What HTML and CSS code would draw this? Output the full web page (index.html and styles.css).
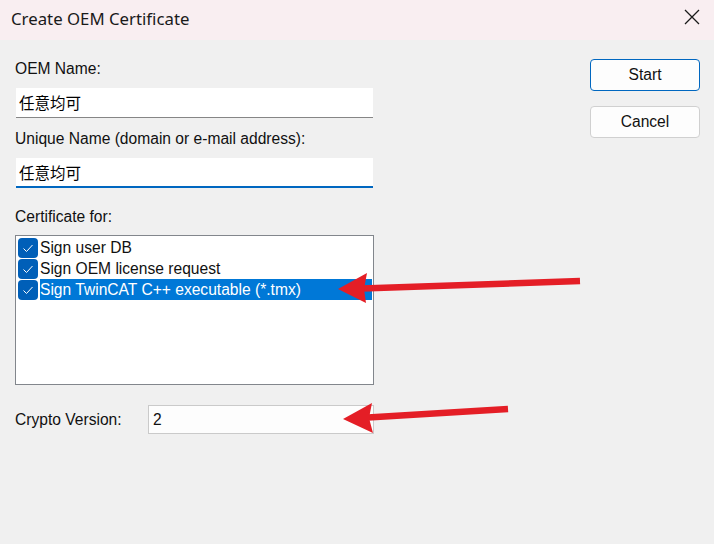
FILE: index.html
```html
<!DOCTYPE html>
<html>
<head>
<meta charset="utf-8">
<link rel="stylesheet" href="styles.css">
</head>
<body>
<div class="window">
  <div class="titlebar">
    <span class="title">Create OEM Certificate</span>
    <svg class="close" width="16" height="16" viewBox="0 0 16 16"><path d="M1 1 L15 15 M15 1 L1 15" stroke="#1a1a1a" stroke-width="1.3" fill="none"/></svg>
  </div>
  <div class="content">
    <div class="form">
      <div class="label">OEM Name:</div>
      <div class="input first">任意均可</div>
      <div class="label gap12">Unique Name (domain or e-mail address):</div>
      <div class="input focused">任意均可</div>
      <div class="label gap20">Certificate for:</div>
      <div class="list">
        <div class="item"><span class="check"><svg width="20" height="20" viewBox="0 0 20 20"><path d="M5.5 10.5 L8.5 13.5 L14.5 7" stroke="#fff" stroke-width="1" fill="none"/></svg></span><span class="text">Sign user DB</span></div>
        <div class="item"><span class="check"><svg width="20" height="20" viewBox="0 0 20 20"><path d="M5.5 10.5 L8.5 13.5 L14.5 7" stroke="#fff" stroke-width="1" fill="none"/></svg></span><span class="text">Sign OEM license request</span></div>
        <div class="item selected"><span class="check"><svg width="20" height="20" viewBox="0 0 20 20"><path d="M5.5 10.5 L8.5 13.5 L14.5 7" stroke="#fff" stroke-width="1" fill="none"/></svg></span><span class="text">Sign TwinCAT C++ executable (*.tmx)</span></div>
      </div>
      <div class="crypto">
        <span class="clabel">Crypto Version:</span>
        <div class="cinput">2</div>
      </div>
    </div>
    <div class="buttons">
      <button class="btn default">Start</button>
      <button class="btn">Cancel</button>
    </div>
  </div>
  <svg class="arrows" width="714" height="544" viewBox="0 0 714 544">
    <line x1="580" y1="281" x2="362" y2="288.5" stroke="#e41e26" stroke-width="6.5"/>
    <polygon points="338,289 367,273 364,289 366,303" fill="#e41e26"/>
    <line x1="508" y1="409" x2="368" y2="417.5" stroke="#e41e26" stroke-width="6.5"/>
    <polygon points="343,419 372,403 369,418 373,433" fill="#e41e26"/>
  </svg>
</div>
</body>
</html>
```

FILE: styles.css
```css
html, body {
  margin: 0;
  padding: 0;
  width: 714px;
  height: 544px;
  overflow: hidden;
  background: #f0f0f0;
}

.window {
  position: relative;
  width: 714px;
  height: 544px;
  background: #f0f0f0;
  font-family: "Liberation Sans", Arial, "Noto Sans CJK SC", sans-serif;
  font-size: 15.6px;
  color: #111;
}

.titlebar {
  height: 40px;
  background: #f9eef1;
  display: flex;
  align-items: center;
  justify-content: space-between;
  padding: 0 14px 0 11px;
  box-sizing: border-box;
}

.title {
  font-family: "Noto Sans", "Open Sans", sans-serif;
  font-size: 16.8px;
  color: #1a1a1a;
  margin-top: -4px;
}

.close {
  margin-top: -6px;
}

.content {
  display: flex;
  justify-content: space-between;
  padding: 20px 14px 0 15px;
}

.form {
  width: 359px;
  display: flex;
  flex-direction: column;
}

.label {
  line-height: 18px;
  height: 18px;
}

.gap12 { margin-top: 12px; }
.gap20 { margin-top: 20px; }

.input {
  margin-top: 10px;
  margin-left: 1px;
  width: 357px;
  height: 30px;
  box-sizing: border-box;
  background: #fff;
  border-bottom: 1px solid #868686;
  padding-left: 3px;
  line-height: 29px;
  font-family: "Noto Sans CJK SC", sans-serif;
  font-size: 15.5px;
  font-weight: 400;
  color: #000;
}

.input.focused {
  border-bottom: 2px solid #0067c0;
  line-height: 28px;
}

.list {
  margin-top: 9px;
  width: 359px;
  height: 150px;
  box-sizing: border-box;
  border: 1px solid #82868c;
  background: #fff;
  padding: 1px 1px 0 2px;
}

.item {
  display: flex;
  align-items: center;
  height: 21px;
}

.check {
  width: 20px;
  height: 20px;
  border-radius: 4px;
  background: #005fb8;
  display: flex;
  flex-shrink: 0;
}

.text {
  margin-left: 2px;
  line-height: 21px;
  flex: 1;
  padding-left: 0;
}

.item.selected .text {
  background: #0078d7;
  color: #fff;
}

.crypto {
  margin-top: 20px;
  display: flex;
  align-items: center;
}

.clabel {
  width: 133px;
  line-height: 18px;
}

.cinput {
  width: 226px;
  height: 29px;
  box-sizing: border-box;
  border: 1px solid #cacaca;
  background: #fdfdfd;
  padding-left: 4px;
  line-height: 27px;
}

.buttons {
  display: flex;
  flex-direction: column;
  gap: 15px;
  margin-top: -1px;
}

.btn {
  width: 110px;
  height: 32px;
  box-sizing: border-box;
  border: 1px solid #d0d0d0;
  border-radius: 4px;
  background: #fdfdfd;
  font-family: "Liberation Sans", Arial, sans-serif;
  font-size: 15.6px;
  color: #111;
  padding: 0;
}

.btn.default {
  border-color: #0067c0;
}

.arrows {
  position: absolute;
  left: 0;
  top: 0;
  pointer-events: none;
}
```
